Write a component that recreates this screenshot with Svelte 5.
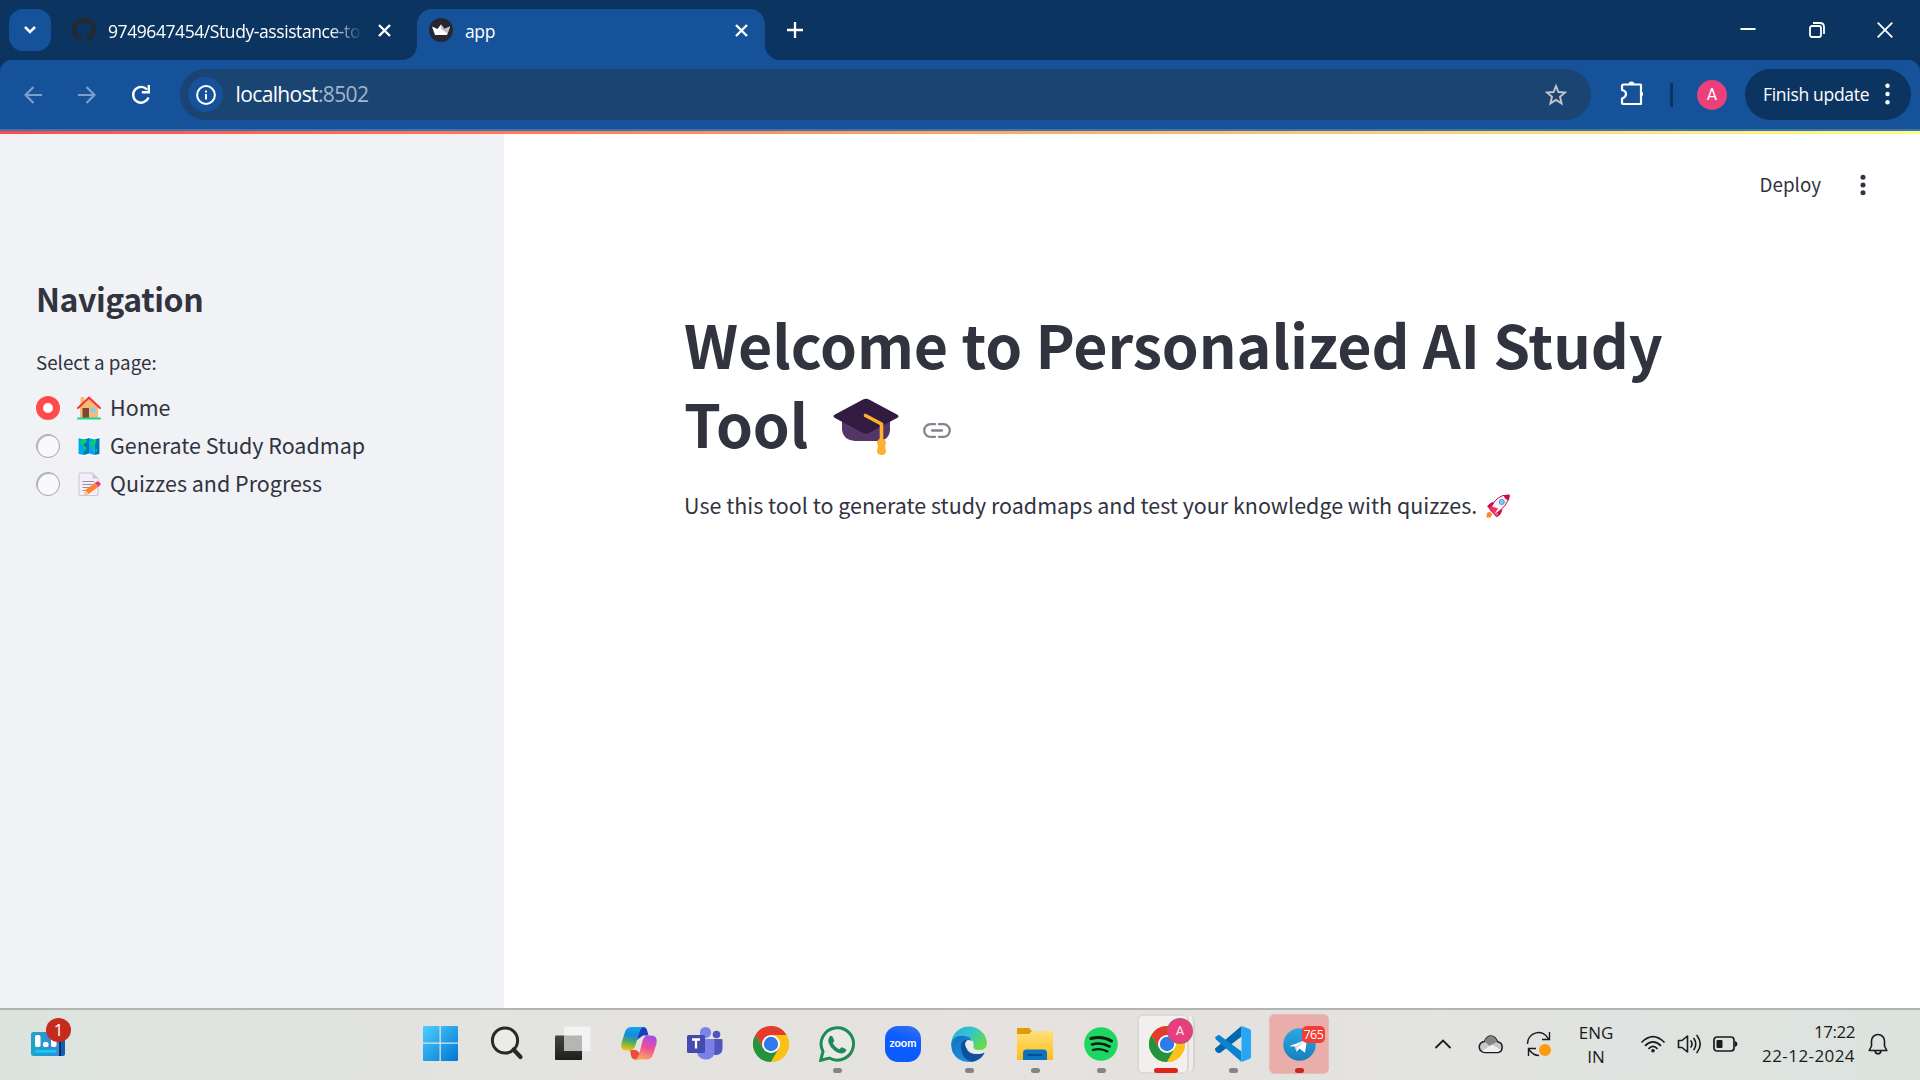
<script>
  const pages = [
    { icon: 'home', label: 'Home', checked: true },
    { icon: 'map', label: 'Generate Study Roadmap', checked: false },
    { icon: 'memo', label: 'Quizzes and Progress', checked: false }
  ];
  const apps = [
    { id: 'start' }, { id: 'search' }, { id: 'taskview' }, { id: 'copilot' }, { id: 'teams' },
    { id: 'chrome' }, { id: 'whatsapp', dot: true }, { id: 'zoom' }, { id: 'edge', dot: true },
    { id: 'folder', dot: true }, { id: 'spotify', dot: true }, { id: 'chrome', active: true },
    { id: 'vscode', dot: true }, { id: 'telegram', alert: true }
  ];
</script>

{#snippet chrome()}
  <svg width="36" height="36" viewBox="0 0 36 36">
    <circle cx="18" cy="18" r="18" fill="#fbc116" />
    <path d="M18 18 L18 9 H33.6 A18 18 0 0 0 2.4 9 L10.2 22.5Z" fill="#e33b2e" />
    <path d="M2.4 9 A18 18 0 0 0 18 36 L25.8 22.5 L18 18 L10.2 22.5Z" fill="#24933f" />
    <path d="M18 9 H33.6 A18 18 0 0 1 18 36 L25.8 22.5Z" fill="#fbc116" />
    <circle cx="18" cy="18" r="9" fill="#fff" />
    <circle cx="18" cy="18" r="7.2" fill="#2f7bea" />
  </svg>
{/snippet}

{#snippet appIcon(id)}
  {#if id === 'start'}
    <svg width="36" height="36" viewBox="0 0 36 36">
      <defs><linearGradient id="win" x1="0" y1="0" x2="1" y2="1" gradientUnits="objectBoundingBox">
        <stop offset="0" stop-color="#4dd0ff" /><stop offset="1" stop-color="#0074d4" /></linearGradient></defs>
      <path d="M1 0H16.500V16.500H0V1Q0 0 1 0ZM17.800 0H34Q35 0 35 1V16.500H17.800ZM0 17.800H16.500V35H1Q0 35 0 34ZM17.800 17.800H35V34Q35 35 34 35H17.800Z" fill="url(#win)" />
    </svg>
  {:else if id === 'search'}
    <svg width="36" height="36" viewBox="0 0 36 36" fill="none" stroke="#292929">
      <circle cx="16" cy="14.500" r="12.600" stroke-width="3" fill="#ebebe9" />
      <path d="M24.500 23.500 31.500 31" stroke-width="4.200" stroke-linecap="round" />
    </svg>
  {:else if id === 'taskview'}
    <svg width="36" height="36" viewBox="0 0 36 36">
      <defs><linearGradient id="tv" x1="0" y1="0" x2="0" y2="1"><stop offset="0" stop-color="#454543" /><stop offset="1" stop-color="#1d1d1d" /></linearGradient></defs>
      <rect x="0" y="9.500" width="27" height="24.500" rx="1" fill="url(#tv)" />
      <rect x="9" y=".5" width="26.500" height="24.500" rx="1" fill="#f3f3f3" />
      <rect x="9" y="9.500" width="18" height="15.500" fill="#b5b5b4" />
    </svg>
  {:else if id === 'copilot'}
    <svg width="38" height="36" viewBox="0 0 38 36">
      <defs>
        <linearGradient id="cpA" x1=".5" y1="0" x2=".3" y2="1"><stop offset="0" stop-color="#10a7ef" /><stop offset=".35" stop-color="#1689dc" /><stop offset=".62" stop-color="#47ab60" /><stop offset="1" stop-color="#f6c50d" /></linearGradient>
        <linearGradient id="cpB" x1=".7" y1="0" x2=".4" y2="1"><stop offset="0" stop-color="#a14bef" /><stop offset=".5" stop-color="#ee5096" /><stop offset="1" stop-color="#ffa65e" /></linearGradient>
      </defs>
      <path d="M19 1H23Q26 1 27 4L28.500 9.500H23L17 14Z" fill="#1740bd" />
      <path d="M10 24H16L21 28L18 33.500H15Q12 33.500 11 29.500Z" fill="#ee4b3b" />
      <path d="M12 1H24Q21 1 19.500 6L15.500 19Q14 24.500 10 24.500H6Q0 24.500 1.500 17L5 6Q6.500 1 12 1Z" fill="url(#cpA)" />
      <path d="M28 9.500H31Q38 9.500 36.500 17.500L33 28.500Q31.500 33.500 26 33.500H14Q17.500 33.500 19 28.500L22.500 15Q24 9.500 28 9.500Z" fill="url(#cpB)" />
    </svg>
  {:else if id === 'teams'}
    <svg width="36" height="36" viewBox="0 0 36 36">
      <circle cx="29.500" cy="8.500" r="3.800" fill="#4f57bf" />
      <path d="M23 13H34.500Q35.500 13 35.500 14V22Q35.500 29 29 29 25 29 23 26Z" fill="#4f57bf" />
      <circle cx="18.500" cy="6.500" r="5.600" fill="#7c83ea" />
      <path d="M10 13H26.500Q27.500 13 27.500 14V25Q27.500 33.500 19 33.500T10 25Z" fill="#7b80e8" />
      <rect x="0" y="9" width="18" height="18" rx="1.600" fill="#464ab0" />
      <path d="M5 13.500H13M9 13.500V22.500" stroke="#fff" stroke-width="2.300" />
    </svg>
  {:else if id === 'chrome'}
    {@render chrome()}
  {:else if id === 'whatsapp'}
    <svg width="36" height="36" viewBox="0 0 36 36">
      <path d="M1.700 34.300 4 25.500A16.200 16.200 0 1 1 10.300 32Z" fill="#ebe9e6" stroke="#1d8b56" stroke-width="3" />
      <path d="M10.500 10.500Q12 9 13.300 10.300L15.200 14.200Q15.500 15.200 13.800 17 16 21.500 20.500 23.300 22.300 21 23.200 21.200L27 23.200Q28 24.500 25.500 26.500 21.500 29.300 15 24.200 6.500 17 10.500 10.500Z" fill="#1d8b56" />
    </svg>
  {:else if id === 'zoom'}
    <span class="zoom">zoom</span>
  {:else if id === 'edge'}
    <svg width="36" height="36" viewBox="0 0 36 36">
      <defs>
        <linearGradient id="eTop" x1="0" y1="0" x2="1" y2=".6"><stop offset="0" stop-color="#2aa6e5" /><stop offset=".5" stop-color="#34c4d0" /><stop offset="1" stop-color="#62dc47" /></linearGradient>
        <linearGradient id="eL" x1="0" y1="0" x2=".5" y2="1"><stop offset="0" stop-color="#1570bd" /><stop offset="1" stop-color="#1590e0" /></linearGradient>
      </defs>
      <path d="M.3 16A18 18 0 0 1 36 16.500Q36 24 28.500 24 21.500 24 22.500 20 23.500 14 18 12 8 8 .3 16Z" fill="url(#eTop)" />
      <path d="M.2 17Q3 9.500 11 9.800 20 10 21 15.500 13 14 13.500 21 14 29 24 35 8 39 1.500 26 0 21 .2 17Z" fill="url(#eL)" />
      <path d="M19 14Q10 12 9.800 21 10 33 21 35.800 29 35 33.300 27.500 33 26 31 26.800 22 30 17 25 12.500 20 19 14Z" fill="#104f9b" />
      <path d="M16 14.300Q20 13 21.800 16.500 23 19 22 21 22.500 25 30 24.500L33 27Q24 30 17.500 24 11.500 19 16 14.300Z" fill="#e9edf0" />
    </svg>
  {:else if id === 'folder'}
    <svg width="36" height="36" viewBox="0 0 36 36">
      <defs><linearGradient id="fo" x1="0" y1="0" x2="0" y2="1"><stop offset="0" stop-color="#ffe07a" /><stop offset="1" stop-color="#fcbd1a" /></linearGradient></defs>
      <path d="M1 2H12L15 5H34V12H0V3Q0 2 1 2Z" fill="#dd9c0a" />
      <path d="M0 8H12L15 5H35Q36 5 36 6V34H0Z" fill="url(#fo)" />
      <path d="M6 34V27Q6 23.500 9.500 23.500H26.500Q30 23.500 30 27V34Z" fill="#0c74bf" />
      <path d="M10.500 29H25" stroke="#0a4d8c" stroke-width="2" />
    </svg>
  {:else if id === 'spotify'}
    <svg width="34" height="34" viewBox="0 0 34 34" fill="none" stroke="#151a17" stroke-linecap="round">
      <circle cx="17" cy="17" r="16.800" fill="#1ed760" stroke="none" />
      <path d="M7 11.500Q18 8.500 27.500 14" stroke-width="3.100" /><path d="M8 17.500Q17 14.800 25.500 19.500" stroke-width="2.600" /><path d="M8.800 22.900Q17 20.800 23.500 24.500" stroke-width="2.100" />
    </svg>
  {:else if id === 'vscode'}
    <svg width="36" height="36" viewBox="0 0 36 36">
      <path d="M26.500 0V10.500L5 27 2.200 26.800.3 24.500 0 22.500Z" fill="#0068b0" />
      <path d="M.2 11 4 8.700 26.500 25.500V36L1 13.500Q0 12.300 .2 11Z" fill="#0b83cf" />
      <path d="M26.500 0 35 3.300Q36 3.800 36 5V31Q36 32.200 35 32.700L26.500 36Z" fill="#29a5f5" />
    </svg>
  {:else if id === 'telegram'}
    <svg width="33" height="33" viewBox="0 0 33 33">
      <defs><linearGradient id="tg" x1="0" y1="0" x2="0" y2="1"><stop offset="0" stop-color="#2ba8e3" /><stop offset="1" stop-color="#187fc0" /></linearGradient></defs>
      <circle cx="16.500" cy="16.500" r="16.200" fill="url(#tg)" />
      <path d="M6 18.300 24 11.500 22 24.700 16.500 20.500 13.500 23.700 12 18.500Z" fill="#fff" /><path d="M12 18.800 22 12.800 14.300 19.800 13.500 23.700Z" fill="#c4dbea" />
    </svg>
  {/if}
{/snippet}

{#snippet emoji(id)}
  {#if id === 'home'}
    <svg width="24" height="24" viewBox="0 0 24 24">
      <path d="M3.500 1H7.500V7L12 3 21 11V22H3V11L3.500 10Z" fill="#f3bd77" />
      <path d="M1 12 12 1.700 23 12" fill="none" stroke="#f8312f" stroke-width="2" stroke-linecap="round" />
      <rect x="5.500" y="12" width="6.500" height="10" fill="#7d4533" /><rect x="13.500" y="12" width="5" height="4.300" fill="#83cbff" />
      <path d="M.8 22.600H23" stroke="#1fd48d" stroke-width="2" stroke-linecap="round" />
    </svg>
  {:else if id === 'map'}
    <svg width="24" height="24" viewBox="0 0 24 24">
      <path d="M.8 3 6.500 4.500 12 2.500 17.500 4.500 23.200 2V20.500L17.500 22.500 12 20.500 6.500 22.500 .8 21Z" fill="#fff" />
      <path d="M1.500 4 7 5.500V21L1.500 20ZM12 4 17.500 5.500V21L12 19.500Z" fill="#00a6ed" /><path d="M7 5.500 12 4V19.500L7 21ZM17.500 5.500 22.500 4V20L17.500 21Z" fill="#0074ba" />
      <path d="M3 6.500 6 5.500 10 5.500 9.500 8 7 10 5.500 9.500 7 12 9.500 13.500 8.500 17 7 16 6 12 3.500 10ZM13.500 8 15.500 6.500 19.500 6 19 9 17 11 15.500 15 14 15 14 12 12.500 9.500ZM18.500 15H20V17.500H18.500Z" fill="#00d26a" />
    </svg>
  {:else if id === 'memo'}
    <svg width="24" height="24" viewBox="0 0 24 24">
      <path d="M3 1H15.500L21 6.500V22.500Q21 23.500 20 23.500H3Q2 23.500 2 22.500V2Q2 1 3 1Z" fill="#f3eef8" stroke="#cdc4d6" />
      <path d="M15.500 1V6.500H21Z" fill="#cdc4d6" /><path d="M5.500 9.500H17M5.500 12.500H15M5.500 15.500H13M5.500 18.500H10" stroke="#998ea4" />
      <path d="M8.500 18 17.500 11 21 15 11.500 22 7.500 23Z" fill="#ff822d" /><path d="M8.500 18 11.500 22 7 23Z" fill="#ffce7c" />
      <path d="M19 10Q22 8.500 23.800 12L21.500 15 17.800 11Z" fill="#f92f60" />
    </svg>
  {/if}
{/snippet}

<div class="screen">
  <header class="tabstrip">
    <button class="tabsearch" aria-label="Search tabs">
      <svg width="14" height="10" viewBox="0 0 14 10" fill="none" stroke="#fff" stroke-width="2.500"><path d="M2 2 7 7 12 2" /></svg>
    </button>
    <div class="tab">
      <svg width="24" height="24" viewBox="0 0 16 16" fill="#24292f"><path d="M8 0C3.580 0 0 3.580 0 8c0 3.540 2.290 6.530 5.470 7.590.4.070.55-.17.55-.38 0-.19-.01-.82-.01-1.490-2.010.37-2.530-.49-2.690-.94-.09-.23-.48-.94-.82-1.130-.28-.15-.68-.52-.01-.53.63-.01 1.080.58 1.230.82.72 1.210 1.870.87 2.330.66.07-.52.28-.87.51-1.070-1.780-.2-3.640-.89-3.640-3.950 0-.87.31-1.590.82-2.150-.08-.2-.36-1.020.08-2.120 0 0 .67-.21 2.200.82.64-.18 1.320-.27 2-.27s1.360.09 2 .27c1.530-1.040 2.200-.82 2.200-.82.44 1.100.16 1.920.08 2.120.51.56.82 1.270.82 2.150 0 3.070-1.870 3.750-3.650 3.950.29.25.54.73.54 1.480 0 1.070-.01 1.930-.01 2.200 0 .21.15.46.55.38A8.010 8.010 0 0 0 16 8c0-4.420-3.580-8-8-8Z" /></svg>
      <span class="title fade">9749647454/Study-assistance-to</span>
      <svg class="x" width="13" height="13" viewBox="0 0 13 13"><path d="M1 1 12 12M12 1 1 12" /></svg>
    </div>
    <div class="tab current">
      <svg width="24" height="24" viewBox="0 0 24 24"><circle cx="12" cy="12" r="12" fill="#262730" /><path d="M3 8.500 8.500 11 12 6.500 15.500 11 21 8.500 18 17H6Z" fill="#fff" /><path d="M12 6.500 15.500 11 21 8.500 18.500 15.500 12 11Z" fill="#bfbfc3" /></svg>
      <span class="title">app</span>
      <svg class="x" width="13" height="13" viewBox="0 0 13 13"><path d="M1 1 12 12M12 1 1 12" /></svg>
    </div>
    <svg class="plus" width="16" height="16" viewBox="0 0 16 16"><path d="M8 0V16M0 8H16" /></svg>
    <div class="controls">
      <svg width="16" height="16" viewBox="0 0 16 16"><path d="M.5 7H15.500" stroke-width="2" /></svg>
      <svg width="16" height="16" viewBox="0 0 16 16"><rect x="1" y="4" width="11" height="11" rx="2" stroke-width="1.800" /><path d="M4 1H11Q15 1 15 5V12" stroke-width="1.800" /></svg>
      <svg width="16" height="16" viewBox="0 0 16 16"><path d="M.7 .7 15.300 15.300M15.300 .7 .7 15.300" stroke-width="1.800" /></svg>
    </div>
  </header>

  <nav class="toolbar">
    <svg class="dim" width="18" height="18" viewBox="0 0 18 18"><path d="M18 9H2M9.500 1 1.500 9 9.500 17" /></svg>
    <svg class="dim fwd" width="18" height="18" viewBox="0 0 18 18"><path d="M0 9H16M8.500 1 16.500 9 8.500 17" /></svg>
    <svg class="reload" width="20" height="20" viewBox="0 0 20 20" fill="none" stroke="#fff" stroke-width="2.400"><path d="M16 4.500A7.900 7.900 0 1 0 17.500 12.500" /><path d="M17.800 0V7.300H10.800" /></svg>
    <div class="omnibox">
      <span class="info"><svg width="20" height="20" viewBox="0 0 20 20"><circle cx="10" cy="10" r="8.900" fill="none" stroke="#fff" stroke-width="2" /><path d="M10 9V14.500M10 5.500V7.500" stroke="#fff" stroke-width="2" /></svg></span>
      <span class="url">localhost<span>:8502</span></span>
      <svg class="star" width="24" height="24" viewBox="0 0 24 24"><path d="M12 3 14.400 9 21 9.500 16 13.800 17.600 20.400 12 16.900 6.400 20.400 8 13.800 3 9.500 9.600 9Z" fill="none" stroke="#c3c5c8" stroke-width="1.900" /></svg>
    </div>
    <svg class="puzzle" width="26" height="26" viewBox="0 0 26 26"><path d="M3.500 4.500H20.500Q21 4.500 21 5V24H3.500Q2 24 2 22.500V18.500Q6 17 6 14T2 10V6Q2 4.500 3.500 4.500Z" fill="none" stroke="#fff" stroke-width="2.200" stroke-linejoin="round" /><path d="M8.500 4.500A3 3 0 0 1 14.500 4.500ZM21 11A3.200 3.200 0 0 1 21 17Z" fill="#fff" /></svg>
    <i class="sep"></i>
    <span class="avatar">A</span>
    <button class="update"><span>Finish update</span><svg width="5" height="22" viewBox="0 0 5 22" fill="#fff"><circle cx="2.500" cy="2.700" r="2.200" /><circle cx="2.500" cy="11" r="2.200" /><circle cx="2.500" cy="19.300" r="2.200" /></svg></button>
  </nav>

  <div class="rainbow"></div>

  <main class="page">
    <aside>
      <h2>Navigation</h2>
      <p class="label">Select a page:</p>
      <div class="radios">
        {#each pages as p}
          <label><i class="radio" class:checked={p.checked}></i><span class="emoji">{@render emoji(p.icon)}</span><span class="text">{p.label}</span></label>
        {/each}
      </div>
    </aside>
    <section>
      <div class="actions">
        <span>Deploy</span>
        <svg width="6" height="22" viewBox="0 0 6 22" fill="#31333f"><circle cx="3" cy="3.300" r="2.500" /><circle cx="3" cy="11" r="2.500" /><circle cx="3" cy="18.700" r="2.500" /></svg>
      </div>
      <h1>
        <span class="line">Welcome to Personalized AI Study</span>
        <span class="line">Tool
          <svg class="cap" width="66" height="58" viewBox="0 0 66 58"><path d="M9 20H57V32Q56 43 44 43H22Q10 42 9 32Z" fill="#533566" /><path d="M30 1.500Q33 0 36 1.500L64 16.500Q67 18 64 20L36 35Q33 36.500 30 35L2 20Q-1 18 2 16.500Z" fill="#321b41" /><path d="M32.500 17.500 48.500 26V44" fill="none" stroke="#ffb02e" stroke-width="3.600" stroke-linecap="round" stroke-linejoin="round" /><path d="M45 42Q48.500 38.500 52 42 54 45 52 47.500L53 53Q53 57 48.500 57T44 53L45 47.500Q43 45 45 42Z" fill="#ffb02e" /></svg>
          <svg class="link" width="28" height="15" viewBox="0 0 28 15" fill="none" stroke="#83848c" stroke-width="2.300"><path d="M12 1.200H7.500A6.300 6.300 0 0 0 7.500 13.800H12M16 1.200H20.500A6.300 6.300 0 0 1 20.500 13.800H16M9 7.500H19" stroke-linecap="round" /></svg>
        </span>
      </h1>
      <p class="intro"><span>Use this tool to generate study roadmaps and test your knowledge with quizzes.</span>
        <svg width="24" height="24" viewBox="0 0 24 24"><path d="M2 13 5.500 10.500 12 18 10.500 23.500 8 20 4 16ZM1 13Q4 8 8 8L6 14ZM11 23Q16 20 16.500 15L10 18Z" fill="#ca0b4a" /><path d="M4.500 16.500Q7 5 17 1.500L23.300 1.500Q22.500 11 9 20.500Z" fill="#f4eff8" stroke="#ca0b4a" stroke-width="1" /><path d="M17.500 1.300Q21 .3 23.500 .5 24 3 22.700 6.500 19 5.500 17.500 1.300Z" fill="#ca0b4a" /><circle cx="15.800" cy="8" r="2.500" fill="#83cbff" stroke="#5092ce" /><path d="M4.500 12 12 14.500 8.500 20 4 16.500Z" fill="#f92f60" /><path d="M1 19Q4 16.500 6 20.500L4.500 23.500H.5Z" fill="#ff822d" /></svg>
      </p>
    </section>
  </main>

  <footer class="taskbar">
    <div class="widgets">
      <svg width="34" height="24" viewBox="0 0 34 24"><defs><linearGradient id="wg"><stop offset="0" stop-color="#1da6c5" /><stop offset=".8" stop-color="#338cdb" /></linearGradient></defs><rect x="22" width="12" height="24" rx="2" fill="#0e5fb5" /><rect width="29" height="24" rx="2.500" fill="url(#wg)" /><path d="M29 4V24" stroke="#08111c" stroke-width="1.400" /><rect x="4" y="3" width="5.500" height="12" rx="1.800" fill="#fff" /><rect x="12" y="10" width="5.500" height="5" rx="1.800" fill="#fff" /><rect x="20" y="6" width="5.500" height="9" rx="1.800" fill="#fff" /><rect x="4" y="18" width="21.500" height="2.800" rx="1.400" fill="#12cdf2" /></svg>
      <b>1</b>
    </div>
    <div class="apps">
      {#each apps as a}
        <div class="app" class:active={a.active} class:alert={a.alert}>
          {@render appIcon(a.id)}
          {#if a.active}<b class="profile">A</b>{/if}
          {#if a.alert}<b class="count">765</b>{/if}
          {#if a.dot || a.active || a.alert}<i class="mark"></i>{/if}
        </div>
      {/each}
    </div>
    <div class="tray">
      <svg width="18" height="12" viewBox="0 0 18 12" fill="none" stroke="#1b1b1b" stroke-width="1.800"><path d="M1.500 10 9 2.500 16.500 10" /></svg>
      <svg class="cloud" width="26" height="20" viewBox="0 0 26 20"><path d="M7 18.500A5.500 5.500 0 0 1 6.500 7.500Q9 2 13 2T19.500 7.800A5.400 5.400 0 0 1 19.500 18.500Z" fill="#c8c8c8" stroke="#1b1b1b" stroke-width="1.500" /><path d="M6.500 7.500Q9 2 13 2T19 7.500L12 12Z" fill="#858585" /><path d="M4 17 14 10.500 23 16 20 18H7Z" fill="#efefef" /></svg>
      <svg class="sync" width="26" height="26" viewBox="0 0 26 26" fill="none" stroke="#1b1b1b" stroke-width="1.400"><path d="M1.500 13A11 11 0 0 1 22.500 8M23.500 1V8.500H16M10 17.500H2.500V25M2.500 18Q7 24.500 13 24.500" /><circle cx="19" cy="19" r="6" fill="#ff9a0c" stroke="none" /></svg>
      <span class="lang">ENG<br />IN</span>
      <svg class="wifi" width="26" height="18" viewBox="0 0 26 18" fill="none" stroke="#1b1b1b" stroke-width="1.700"><path d="M1.500 7.500Q13-4 24.500 7.500M5 10.800Q13 3 21 10.800M8.500 13.800Q13 9 17.500 13.800" /><circle cx="13" cy="15.700" r="1.800" fill="#1b1b1b" stroke="none" /></svg>
      <svg class="vol" width="26" height="20" viewBox="0 0 26 20" fill="none" stroke="#1b1b1b" stroke-width="1.600"><path d="M1.500 6.500H5L10.500 2V18L5 13.500H1.500Z" stroke-linejoin="round" /><path d="M14 7Q16 10 14 13M17 4.500Q20.500 10 17 15.500M20 1.500Q26.500 10 20 18.500" stroke-linecap="round" /></svg>
      <svg class="bat" width="25" height="16" viewBox="0 0 25 16"><rect x="1" y="1" width="20" height="14" rx="3" fill="none" stroke="#1b1b1b" stroke-width="1.700" /><rect x="3.500" y="4" width="6" height="8" rx="1" fill="#1b1b1b" /><path d="M22 5Q24.500 6 24.500 8T22 11Z" fill="#1b1b1b" /></svg>
      <span class="clock">17:22<br /><span class="date">22-12-2024</span></span>
      <svg class="bell" width="20" height="22" viewBox="0 0 20 22" fill="none" stroke="#1b1b1b" stroke-width="1.600"><path d="M3.500 8A6.500 6.500 0 0 1 16.500 8V13L18.800 17.500H1.200L3.500 13ZM7 18Q7.500 20.800 10 20.800T13 18" stroke-linejoin="round" /></svg>
    </div>
  </footer>
</div>

<style>
  :global(body) { margin: 0; overflow: hidden; }
  .screen { width: 1920px; height: 1080px; display: flex; flex-direction: column; background: #fff; font-family: "Open Sans", "Noto Sans", sans-serif; }
  svg { display: block; flex: none; }
  button { border: 0; padding: 0; font: inherit; color: inherit; }
  .tabstrip { height: 60px; flex: none; display: flex; align-items: flex-start; background: #0c3460; color: #fff; padding-left: 9px; box-sizing: border-box; }
  .tabsearch { width: 42px; height: 42px; margin-top: 9px; border-radius: 14px; background: #15529a; display: flex; align-items: center; justify-content: center; }
  .tab { box-sizing: border-box; height: 51px; margin-top: 9px; padding: 9px 17px 0 12px; display: flex; align-items: flex-start; width: 348px; position: relative; }
  .tab:not(.current) { margin-left: 9px; width: 348px; margin-right: 9px; padding-right: 17.500px; }
  .tab.current { background: #15529a; border-radius: 15px 15px 0 0; }
  .tab.current::before, .tab.current::after { content: ''; position: absolute; bottom: 0; width: 15px; height: 15px; }
  .tab.current::before { left: -15px; background: radial-gradient(circle at 0 0, transparent 14.500px, #15529a 15.500px); }
  .tab.current::after { right: -15px; background: radial-gradient(circle at 100% 0, transparent 14.500px, #15529a 15.500px); }
  .title { flex: 1; margin-left: 12px; font-size: 17.500px; line-height: 27px; white-space: nowrap; letter-spacing: -.38px; }
  .fade { flex: none; width: 256px; letter-spacing: -.42px; -webkit-mask-image: linear-gradient(90deg, #000 222px, transparent 254px); mask-image: linear-gradient(90deg, #000 222px, transparent 254px); }
  .x { margin: 5.500px 0 0 auto; stroke: #fff; stroke-width: 2.400; }
  .plus { margin: 22px 0 0 22px; stroke: #fff; stroke-width: 2.300; }
  .controls { display: flex; gap: 52.500px; margin: 22px 27px 0 auto; fill: none; stroke: #fff; }
  .toolbar { height: 71px; flex: none; box-sizing: border-box; display: flex; align-items: center; padding: 0 9px 0 24px; color: #fff; border-bottom: 2px solid #3c74b0; background: radial-gradient(circle at 12px 12px, #15529a 11.500px, #0c3460 12.500px) 0 0 / 12px 12px no-repeat, radial-gradient(circle at 0 12px, #15529a 11.500px, #0c3460 12.500px) 100% 0 / 12px 12px no-repeat, #15529a; }
  .dim { fill: none; stroke: #7c9fca; stroke-width: 2.200; }
  .fwd { margin-left: 36px; }
  .reload { margin-left: 35px; }
  .omnibox { width: 1411px; height: 51px; margin-left: 29px; box-sizing: border-box; border-radius: 26px; background: #1a4573; display: flex; align-items: center; padding: 0 23px 0 8px; }
  .info { width: 35px; height: 35px; border-radius: 50%; background: #15529a; display: flex; align-items: center; justify-content: center; }
  .url { margin-left: 12.500px; font-size: 21px; letter-spacing: -.62px; line-height: 28px; padding-bottom: 2px; }
  .url span { color: #a5b6cb; }
  .star { margin-left: auto; }
  .puzzle { margin: -3px 0 0 28.500px; }
  .sep { width: 2.500px; height: 24px; background: #0c3460; margin-left: 24.500px; }
  .avatar { width: 30px; height: 30px; border-radius: 50%; background: #ec407a; margin-left: 24.500px; text-align: center; font: 16px/30px Roboto, sans-serif; }
  .update { margin-left: 18px; width: 166px; height: 51px; border-radius: 26px; background: #0c3460; box-sizing: border-box; padding: 0 21.500px 1px 18px; display: flex; align-items: center; justify-content: space-between; color: #fff; font-size: 17.500px; letter-spacing: -.3px; white-space: nowrap; }
  .rainbow { height: 3px; flex: none; background: linear-gradient(90deg, #ff4b4b, #ffff80); }
  .page { flex: 1; display: flex; min-height: 0; color: #31333f; font-family: "Noto Sans CJK SC", sans-serif; }
  aside { width: 504px; box-sizing: border-box; background: #f0f2f6; padding: 143px 36px 0; }
  h2 { margin: 0; font-size: 32px; line-height: 43px; font-weight: 600; letter-spacing: -.42px; }
  .label { margin: 27px 0 0; font-size: 18.800px; line-height: 30px; }
  .radios { margin-top: 12px; }
  label { display: flex; align-items: center; height: 38px; font-size: 21.480px; line-height: 36px; }
  .text { padding-bottom: 2px; white-space: nowrap; }
  .radio { box-sizing: border-box; width: 24px; height: 24px; border-radius: 50%; border: 1.500px solid #a3a5ad; background: #f9f9fb; box-shadow: inset 1px 1px 0 #b5b6bd; }
  .radio.checked { border: 7.500px solid #ff4b4b; background: #fff; box-shadow: none; }
  .emoji { margin: 0 9px 0 17px; }
  section { flex: 1; }
  .actions { display: flex; justify-content: flex-end; align-items: center; gap: 39px; padding-right: 54px; height: 36px; padding-top: 33px; font-size: 18.800px; line-height: 30px; }
  .actions span { padding-bottom: 2px; }
  h1 { margin: 101px 0 0 180px; font-size: 59.100px; line-height: 79px; font-weight: 700; letter-spacing: -.08px; }
  .line { display: flex; white-space: nowrap; height: 79px; }
  .cap { margin: 15px 0 0 25px; }
  .link { margin: 40px 0 0 24px; }
  .intro { margin: 24.500px 0 0 180px; font-size: 21.480px; line-height: 36px; display: flex; gap: 9px; white-space: nowrap; }
  .intro svg { margin-top: 7px; }
  .taskbar { height: 72px; flex: none; box-sizing: border-box; border-top: 2px solid #b3b3b2; display: flex; background: linear-gradient(90deg, #dce3df 0, #dfe3e0 10%, #e3e3e0 25%, #e5e2df 50%, #e4e1de 60%, #e3e3e1 75%, #dee3e0 90%, #dce3df 100%); color: #1b1b1b; }
  .widgets { position: relative; width: 377px; padding: 22px 0 0 31px; }
  .widgets b { position: absolute; left: 46px; top: 8px; width: 25px; height: 24px; border-radius: 50%; background: #c42b1c; color: #fff; font-size: 17px; font-weight: 400; line-height: 24px; text-align: center; }
  .apps { display: flex; padding-top: 4px; }
  .app { width: 60px; height: 60px; margin: 0 3px; display: flex; align-items: center; justify-content: center; position: relative; border-radius: 6px; }
  .active { background: #f1f0ee; box-shadow: inset 0 0 0 2px #dcdad8; width: 52px; margin: 0 11px 0 3px; }
  .active::after { content: ''; position: absolute; left: 52px; top: 1px; width: 4px; height: 57px; border-right: 2px solid #d7d5d3; border-radius: 0 6px 6px 0; background: #eeecea; }
  .active > :global(svg) { margin-left: 8px; }
  .alert { background: #e9adaa; box-shadow: inset 0 0 0 1px #e5bbb8; }
  .mark { position: absolute; width: 9px; height: 5px; border-radius: 3px; background: #858482; bottom: 1px; left: 26px; }
  .active .mark { width: 24px; background: #e3241b; left: 17px; }
  .alert .mark { background: #c42b1c; }
  .profile { position: absolute; left: 31px; top: 5px; width: 24px; height: 24px; border-radius: 50%; background: #e83e7b; box-shadow: 0 0 0 1px #a65c77; color: #fbd3e0; font: 500 13px/24px Roboto, sans-serif; text-align: center; z-index: 1; }
  .count { position: absolute; left: 33px; top: 12px; width: 23px; height: 17px; border-radius: 5px; background: #f23c34; color: #fff; font-weight: 400; font-size: 12.500px; line-height: 17px; letter-spacing: -.4px; text-align: center; }
  .zoom { width: 36px; height: 36px; border-radius: 13px; background: linear-gradient(20deg, #0b5cff 60%, #3b73ee); color: #fff; font: 500 11px/34px Lato, sans-serif; font-weight: 700; text-align: center; }
  .tray { flex: 1; display: flex; align-items: center; padding: 0 32px 2px 102px; font-size: 17px; line-height: 24px; letter-spacing: -.45px; }
  .cloud { margin-left: 26px; }
  .sync { margin-left: 22px; }
  .lang { width: 40px; text-align: center; margin-left: 24px; padding-top: 2px; letter-spacing: -.1px; }
  .wifi { margin-left: 24px; }
  .vol { margin-left: 11px; }
  .bat { margin-left: 10px; }
  .clock { width: 100px; margin-left: auto; text-align: right; white-space: nowrap; }
  .date { letter-spacing: .42px; }
  .bell { margin-left: 13px; }
</style>
